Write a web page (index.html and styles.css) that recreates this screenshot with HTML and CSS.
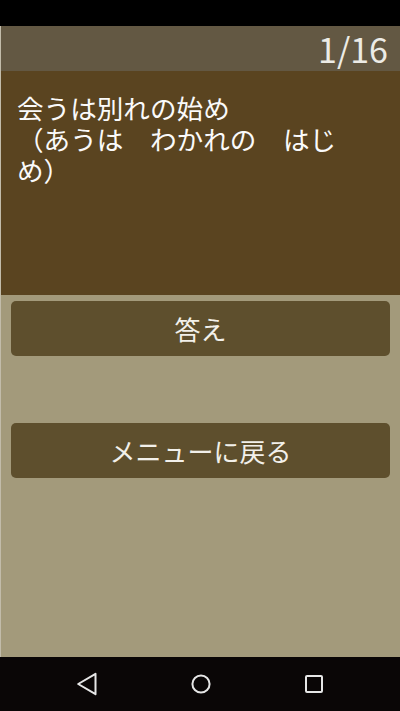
FILE: index.html
```html
<!DOCTYPE html>
<html lang="ja">
<head>
<meta charset="utf-8">
<link rel="stylesheet" href="styles.css">
</head>
<body>
<div class="screen">
  <div class="status"></div>
  <div class="app">
    <div class="header"><span class="counter">1/16</span></div>
    <div class="question">会うは別れの始め<br>（あうは　わかれの　はじめ）</div>
    <div class="actions">
      <div class="btn">答え</div>
      <div class="btn">メニューに戻る</div>
    </div>
  </div>
  <div class="nav">
    <svg class="nav-icon" width="24" height="24" viewBox="0 0 24 24"><path d="M20.5 1.8 L3.2 12 L20.5 22.2 Z" fill="none" stroke="#e6e6e6" stroke-width="2" stroke-linejoin="round"/></svg>
    <svg class="nav-icon" width="24" height="24" viewBox="0 0 24 24"><circle cx="12" cy="12" r="8.6" fill="none" stroke="#e6e6e6" stroke-width="2"/></svg>
    <svg class="nav-icon" width="24" height="24" viewBox="0 0 24 24"><rect x="4" y="4" width="16" height="16" rx="1" fill="none" stroke="#e6e6e6" stroke-width="2"/></svg>
  </div>
</div>
</body>
</html>
```

FILE: styles.css
```css
html, body {
  margin: 0;
  padding: 0;
}
body {
  width: 400px;
  height: 711px;
  overflow: hidden;
  font-family: "Noto Sans CJK JP", "Noto Sans", sans-serif;
  background: #000;
}
.screen {
  display: flex;
  flex-direction: column;
  height: 711px;
}
.status {
  height: 26px;
  background: #000;
  flex: none;
}
.app {
  flex: 1;
  display: flex;
  flex-direction: column;
  background: #a39a7b;
  border-left: 1px solid #c2bcaa;
}
.header {
  height: 45px;
  flex: none;
  background: #635843;
  display: flex;
  align-items: center;
  justify-content: flex-end;
  padding-right: 12px;
}
.counter {
  color: #ecebe6;
  font-size: 34px;
  line-height: 45px;
}
.question {
  height: 224px;
  flex: none;
  box-sizing: border-box;
  background: #5a4420;
  color: #fafafa;
  font-size: 26.6px;
  line-height: 31px;
  padding: 21px 30px 0 16px;
  line-break: strict;
  text-spacing-trim: space-all;
}
.actions {
  display: flex;
  flex-direction: column;
  gap: 67px;
  padding: 6px 10px 0 10px;
}
.btn {
  height: 55px;
  border-radius: 5px;
  background: #5e4f2d;
  color: #f2f0ea;
  font-size: 26px;
  display: flex;
  align-items: center;
  justify-content: center;
}
.nav {
  height: 54px;
  flex: none;
  background: #0a0606;
  display: flex;
  align-items: center;
  justify-content: space-between;
  padding: 0 74px 0 75px;
}
.nav-icon {
  display: block;
}
```
